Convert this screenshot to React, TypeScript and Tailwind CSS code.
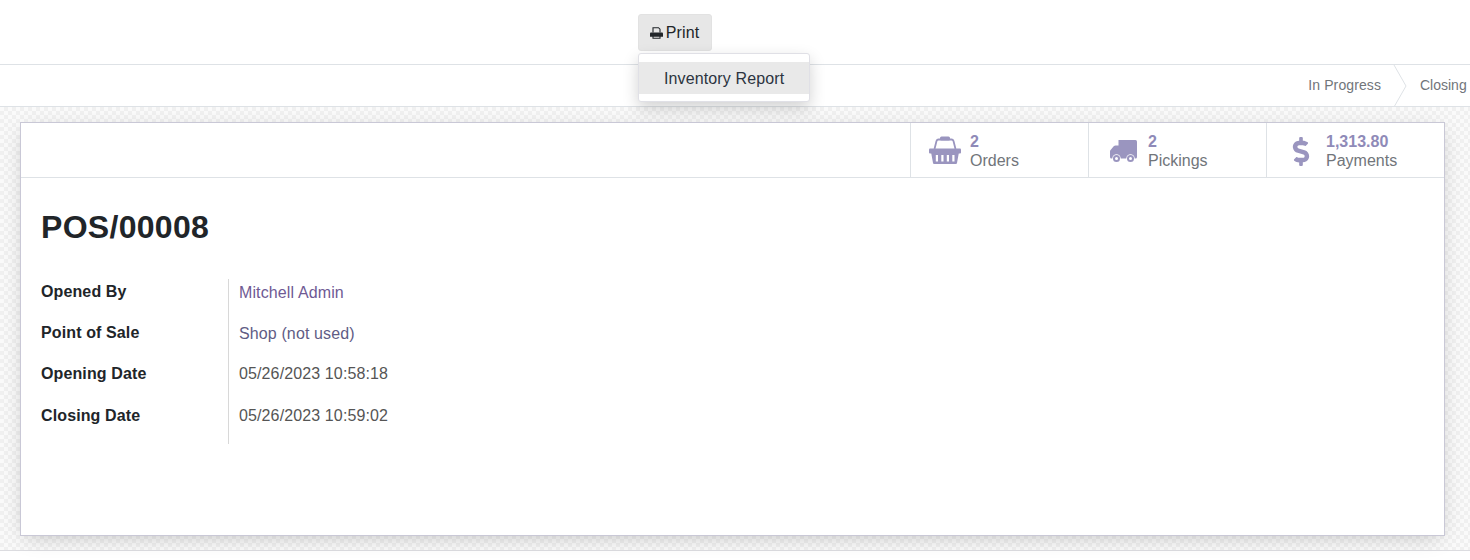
import type { ReactNode } from "react";
import { FaDollarSign } from "react-icons/fa";

const fields = [
  { label: "Opened By", value: "Mitchell Admin", color: "text-[#6f5a94] pt-0.5", h: "h-[41px]" },
  { label: "Point of Sale", value: "Shop (not used)", color: "text-[#5f5c85] pt-0.5", h: "h-[41px]" },
  { label: "Opening Date", value: "05/26/2023 10:58:18", color: "text-[#555555] pt-px", h: "h-[42px]" },
  { label: "Closing Date", value: "05/26/2023 10:59:02", color: "text-[#555555] pt-px", h: "h-[41px]" },
];

function PrintIcon() {
  return (
    <svg viewBox="0 0 13 12" className="-ml-px h-3 w-[13px] shrink-0">
      <path d="M3 5.500V.7h5.500L10 2.200V5.500M3 9v2.300h7V9" fill="none" stroke="#212529" strokeWidth="1.100" />
      <path d="M0 6.700C0 5.900.5 5.500 1.200 5.500h10.600c.7 0 1.200.4 1.200 1.200V9.800H0z" fill="#212529" />
    </svg>
  );
}

function BasketIcon() {
  return (
    <svg viewBox="0 0 32 28" className="h-7 w-8 fill-[#9a95bf]">
      <path d="M5.500 13 7.500 5Q8 3.500 9.500 3.500H22.500Q24 3.500 24.500 5L26.500 13" fill="none" stroke="#9a95bf" strokeWidth="1.800" />
      <rect x="11" y="0.500" width="10" height="4" rx="1.500" />
      <rect x="0" y="12.500" width="32" height="5" rx="1" />
      <path
        fillRule="evenodd"
        d="M2 16H30L28 27Q27.800 28 27 28H5Q4.200 28 4 27ZM6.800 19V25.500H9V19ZM12.300 19V25.500H14.500V19ZM17.800 19V25.500H20V19ZM23.300 19V25.500H25.500V19Z"
      />
    </svg>
  );
}

function TruckIcon() {
  return (
    <svg viewBox="0 0 27 23" className="ml-0.5 mt-0.5 h-[23px] w-[27px] fill-[#9a95bf]">
      <path d="M8.500 0H25.500Q27 0 27 1.500V17Q27 18.500 25.500 18.500H8.500Z" />
      <path d="M0 11.500Q0 10.500.8 9.700L3.700 6.300Q4.500 5.500 5.500 5.500H9V18.500H1.500Q0 18.500 0 17Z" />
      <circle cx="6.500" cy="18.500" r="4.200" fill="#fff" />
      <circle cx="6.500" cy="18.500" r="3.500" />
      <circle cx="6.500" cy="18.500" r="1.500" fill="#fff" />
      <circle cx="20.500" cy="18.500" r="4.200" fill="#fff" />
      <circle cx="20.500" cy="18.500" r="3.500" />
      <circle cx="20.500" cy="18.500" r="1.500" fill="#fff" />
    </svg>
  );
}

function StatButton({ icon, value, label }: { icon: ReactNode; value: string; label: string }) {
  return (
    <div className="flex w-[178px] items-center border-l border-[#dee2e6]">
      <div className="flex w-[59px] justify-center pl-2">{icon}</div>
      <div className="flex flex-col pt-px text-base leading-[19px]">
        <span className="font-bold text-[#8f8ab8]">{value}</span>
        <span className="text-[#71757a]">{label}</span>
      </div>
    </div>
  );
}

export default function App() {
  return (
    <div className="relative h-[560px] w-[1470px] overflow-hidden bg-white font-['Liberation_Sans',Arial,sans-serif] text-base text-[#212529]">
      <div className="flex h-[65px] border-b border-[#dee2e6] pl-[638px] pt-3.5">
        <button className="flex h-[37px] w-[74px] items-center justify-center gap-[3px] rounded-[3px] border border-[#e2e2e2] bg-[#e7e7e7] tracking-[0.15px] text-[#212529]">
          <PrintIcon />
          Print
        </button>
      </div>

      <div className="absolute left-[638px] top-[53px] z-10 h-[49px] w-[172px] rounded-[3px] border border-[#e0e0e6] bg-white pt-2 shadow-[0_6px_16px_rgba(0,0,0,0.18)]">
        <div className="flex h-8 items-center bg-[#e9e9e9] pb-px pl-[25px] pt-[3px] tracking-[0.12px] text-[#2c3440]">Inventory Report</div>
      </div>

      <div className="flex h-[42px] items-center justify-end border-b border-[#dee2e6] pb-0.5 text-sm text-[#71757a]">
        <span className="tracking-[0.1px]">In Progress</span>
        <svg viewBox="0 0 14 42" className="ml-3 mt-0.5 h-[42px] w-[14px] fill-none stroke-[#dee2e6]">
          <path d="M1 0 13 21 1 42" />
        </svg>
        <span className="ml-[13px] w-[50px] overflow-hidden whitespace-nowrap">Closing</span>
      </div>

      <div className="h-[444px] border-b border-[#dcdce0] bg-[#f4f4f4] bg-[repeating-conic-gradient(#f0f0f0_0_25%,#fafafa_0_50%)] bg-[length:8px_8px] px-5 pt-[15px]">
        <div className="h-[414px] w-[1425px] border border-[#c9c8d6] bg-white shadow-[0_5px_20px_-6px_rgba(0,0,0,0.25)]">
          <div className="flex h-[55px] justify-end border-b border-[#dee2e6]">
            <StatButton icon={<BasketIcon />} value="2" label="Orders" />
            <StatButton icon={<TruckIcon />} value="2" label="Pickings" />
            <StatButton icon={<FaDollarSign className="mt-0.5 h-[29px] w-[18px] text-[#9a95bf]" />} value="1,313.80" label="Payments" />
          </div>

          <h1 className="pl-5 pt-[30px] text-[32px] font-bold leading-[38px] tracking-[0.3px] text-[#212529]">POS/00008</h1>

          <div className="ml-5 mt-[33px] flex tracking-[0.12px]">
            <div className="w-[187px]">
              {fields.map((f) => (
                <div key={f.label} className={`${f.h} pt-px font-bold leading-6 text-[#212529]`}>{f.label}</div>
              ))}
            </div>
            <div className="h-[165px] border-l border-[#d8d8d8] pl-2.5">
              {fields.map((f) => (
                <div key={f.label} className={`${f.h} leading-6 ${f.color}`}>{f.value}</div>
              ))}
            </div>
          </div>
        </div>
      </div>
    </div>
  );
}
